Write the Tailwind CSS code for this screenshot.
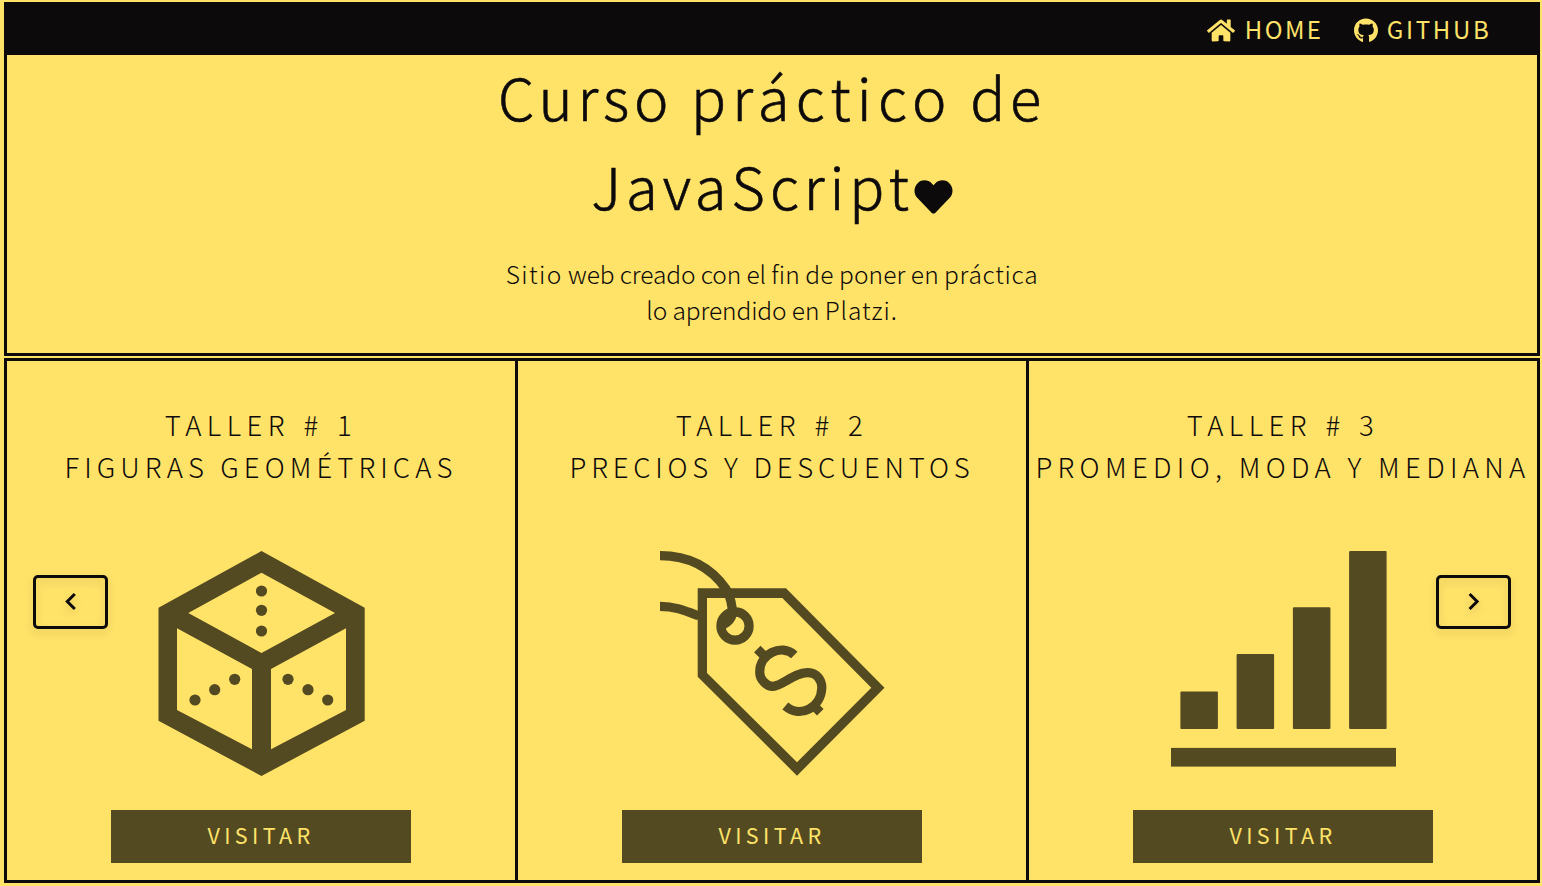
<!DOCTYPE html>
<html lang="es">
<head>
<meta charset="utf-8">
<title>Curso práctico de JavaScript</title>
<script src="https://cdn.jsdelivr.net/npm/@tailwindcss/browser@4"></script>
</head>
<body class="h-[886px] overflow-hidden bg-[#ffe268] pt-[2px] pr-[2px] pl-1 font-['Noto_Sans_CJK_JP','Noto_Sans',sans-serif] font-light text-[#0c0a0b]">
<header class="h-[354px] border-[3px] border-t-0 border-[#0c0a0b]">
  <nav class="-mx-[3px] flex h-[53px] items-center justify-end bg-[#0c0a0b] pr-[48.5px] text-[24px] leading-[50px] font-normal text-[#ffe268]">
    <a class="flex items-center">
      <svg class="mt-[3px] h-[25px] w-7" viewBox="0 0 576 512" fill="currentColor"><path d="M280.37 148.26L96 300.11V464a16 16 0 0 0 16 16l112.06-.29a16 16 0 0 0 15.92-16V368a16 16 0 0 1 16-16h64a16 16 0 0 1 16 16v95.64a16 16 0 0 0 16 16.05L464 480a16 16 0 0 0 16-16V300L295.67 148.26a12.19 12.19 0 0 0-15.3 0zM571.6 251.47L488 182.56V44.05a12 12 0 0 0-12-12h-56a12 12 0 0 0-12 12v72.61L318.47 43a48 48 0 0 0-61 0L4.34 251.47a12 12 0 0 0-1.6 16.9l25.5 31A12 12 0 0 0 45.15 301l235.22-193.74a12.19 12.19 0 0 1 15.3 0L530.9 301a12 12 0 0 0 16.9-1.6l25.5-31a12 12 0 0 0-1.7-16.93z"/></svg>
      <span class="mt-px ml-[9.5px] w-[109.5px] tracking-[2.4px]">HOME</span>
    </a>
    <a class="flex items-center">
      <svg class="mt-[3px] h-[25px] w-6" viewBox="0 0 496 512" fill="currentColor"><path d="M165.900 397.400c0 2-2.300 3.600-5.200 3.600-3.300.3-5.600-1.300-5.600-3.600 0-2 2.300-3.600 5.200-3.600 3-.3 5.600 1.300 5.600 3.600zm-31.100-4.500c-.7 2 1.300 4.300 4.300 4.900 2.600 1 5.600 0 6.200-2s-1.300-4.300-4.300-5.200c-2.600-.7-5.500.3-6.200 2.300zm44.200-1.700c-2.900.7-4.900 2.600-4.600 4.900.3 2 2.900 3.300 5.900 2.600 2.900-.7 4.900-2.600 4.600-4.600-.3-1.900-3-3.200-5.900-2.900zM244.800 8C106.100 8 0 113.300 0 252c0 110.900 69.800 205.800 169.500 239.200 12.800 2.300 17.300-5.600 17.300-12.100 0-6.200-.3-40.400-.3-61.400 0 0-70 15-84.700-29.800 0 0-11.400-29.100-27.800-36.600 0 0-22.900-15.700 1.600-15.400 0 0 24.900 2 38.600 25.800 21.900 38.600 58.600 27.500 72.900 20.900 2.300-16 8.800-27.100 16-33.700-55.900-6.200-112.300-14.300-112.300-110.500 0-27.500 7.600-41.300 23.600-58.900-2.600-6.500-11.100-33.300 2.600-67.900 20.900-6.500 69 27 69 27 20-5.600 41.500-8.500 62.800-8.500s42.800 2.900 62.800 8.500c0 0 48.100-33.600 69-27 13.700 34.700 5.200 61.400 2.600 67.900 16 17.700 25.800 31.500 25.800 58.900 0 96.500-58.900 104.200-114.800 110.500 9.200 7.900 17 22.900 17 46.400 0 33.700-.3 75.400-.3 83.600 0 6.500 4.600 14.400 17.300 12.100C428.200 457.800 496 362.900 496 252 496 113.300 383.500 8 244.800 8z"/></svg>
      <span class="mt-px ml-[8.5px] tracking-[2.7px]">GITHUB</span>
    </a>
  </nav>
  <h1 class="-mt-[3px] text-center text-[58px] leading-[89px] whitespace-nowrap [-webkit-text-stroke:0.6px]">
    <span class="block tracking-[4.8px]">Curso <span class="tracking-[6.2px]">práctico</span> de</span>
    <span class="flex items-center justify-center tracking-[4.9px]">JavaScript<svg class="mt-[23px] h-[38px] w-[39px]" viewBox="0 0 512 512" fill="currentColor"><path d="M462.300 62.600C407.500 15.900 326 24.300 275.700 76.200L256 96.500l-19.700-20.300C186.100 24.300 104.500 15.900 49.700 62.600c-62.800 53.600-66.100 149.800-9.900 207.900l193.500 199.800c12.500 12.900 32.800 12.900 45.300 0l193.500-199.800c56.300-58.100 53-154.300-9.800-207.900z"/></svg></span>
  </h1>
  <p class="mt-[26px] text-center text-[24.5px] leading-9 tracking-[-0.1px]"><span class="tracking-[1.4px]">Sitio</span> web creado con el <span class="tracking-[0.1px]">fin de poner en</span> <span class="tracking-[0.7px]">práctica</span><br>lo aprendido en <span class="tracking-[0.9px]">Platzi.</span></p>
</header>

<main class="relative mt-[2px] flex h-[525px]">
  <section class="flex w-[514px] shrink-0 flex-col items-center border-[3px] border-[#0c0a0b] pt-[42px]">
    <h2 class="text-center text-[27.5px] leading-[42px] whitespace-nowrap"><span class="block tracking-[5.5px] [word-spacing:1.8px]">TALLER # 1</span><span class="block tracking-[5.1px]">FIGURAS GEOMÉTRICAS</span></h2>
    <svg class="mt-16 size-[225px]" viewBox="0 0 225 225" fill="#534a21">
      <path fill-rule="evenodd" d="M112.500 0L215.700 56.700V169.700L112.500 225L9.500 169.700V56.700ZM112.500 21.700L39.300 62L112.500 102L186 62ZM28 77.300V159L103 198.300V118ZM197 77.300L122 118V198.300L197 159Z"/>
      <circle cx="112.500" cy="40" r="5.600"/><circle cx="112.500" cy="59.300" r="5.600"/><circle cx="112.500" cy="80" r="5.600"/>
      <circle cx="46" cy="149" r="5.600"/><circle cx="65.700" cy="138.700" r="5.600"/><circle cx="85.700" cy="128.300" r="5.600"/>
      <circle cx="139" cy="128.300" r="5.600"/><circle cx="159" cy="138.700" r="5.600"/><circle cx="178.700" cy="149" r="5.600"/>
    </svg>
    <a class="mt-[34px] block h-[53px] w-[300px] bg-[#534a21] text-center text-[21.5px] leading-[50px] font-normal tracking-[4.4px] text-[#ffe268]">VISITAR</a>
  </section>
  <section class="-ml-[3px] flex w-[514px] shrink-0 flex-col items-center border-[3px] border-[#0c0a0b] pt-[42px]">
    <h2 class="text-center text-[27.5px] leading-[42px] whitespace-nowrap"><span class="block tracking-[5.5px] [word-spacing:1.8px]">TALLER # 2</span><span class="block tracking-[4.8px]">PRECIOS Y DESCUENTOS</span></h2>
    <svg class="mt-16 size-[225px]" viewBox="0 0 225 225" fill="none" stroke="#534a21" stroke-width="9.200">
      <path fill="#534a21" stroke="none" fill-rule="evenodd" d="M37.700 37.300H126L224.500 136.700L137 224.700L37.700 125.700ZM47 47V122L137 211.300L211.300 136.700L122.300 47Z"/>
      <circle cx="75" cy="75" r="14.100"/>
      <path d="M0 4.700C30 4.700 52 18 66 38C71 47 72.500 57 72.300 63Q71 70 63 74"/>
      <path d="M0 55.300C15 55.300 26 60 39 65"/>
      <path d="M134.300 104C122 92 98.700 103 99.800 122C99.800 128 106 135.500 113 135.300C122 135 135 121 148 121.700C157 122 162 129 161.800 137C161 156 141 168 125.300 155M97.300 98L104.500 105.200M153.300 154.300L160.300 161.300"/>
    </svg>
    <a class="mt-[34px] block h-[53px] w-[300px] bg-[#534a21] text-center text-[21.5px] leading-[50px] font-normal tracking-[4.4px] text-[#ffe268]">VISITAR</a>
  </section>
  <section class="-ml-[3px] flex w-[514px] shrink-0 flex-col items-center border-[3px] border-[#0c0a0b] pt-[42px]">
    <h2 class="text-center text-[27.5px] leading-[42px] whitespace-nowrap"><span class="block tracking-[5.5px] [word-spacing:1.8px]">TALLER # 3</span><span class="block tracking-[5.35px]">PROMEDIO, MODA Y MEDIANA</span></h2>
    <svg class="mt-16 size-[225px]" viewBox="0 0 225 225" fill="#534a21">
      <rect x="9.400" y="140.600" width="37.500" height="37.500" rx="1"/><rect x="65.600" y="103.100" width="37.500" height="75" rx="1"/><rect x="121.900" y="56.300" width="37.500" height="121.800" rx="1"/><rect x="178.100" y="0" width="37.500" height="178.100" rx="1"/><rect x="0" y="196.900" width="225" height="18.700"/>
    </svg>
    <a class="mt-[34px] block h-[53px] w-[300px] bg-[#534a21] text-center text-[21.5px] leading-[50px] font-normal tracking-[4.4px] text-[#ffe268]">VISITAR</a>
  </section>
  <button class="absolute top-[217px] left-[29px] flex h-[54px] w-[75px] items-center justify-center rounded-[5px] border-[3px] border-[#0c0a0b] drop-shadow-[0_4px_4px_rgba(0,0,0,0.12)]">
    <svg class="size-6" viewBox="0 0 24 24" fill="none" stroke="#0c0a0b" stroke-width="3"><path d="M15.800 4L8.300 11.500L15.800 19"/></svg>
  </button>
  <button class="absolute top-[217px] right-[29px] flex h-[54px] w-[75px] items-center justify-center rounded-[5px] border-[3px] border-[#0c0a0b] drop-shadow-[0_4px_4px_rgba(0,0,0,0.12)]">
    <svg class="size-6" viewBox="0 0 24 24" fill="none" stroke="#0c0a0b" stroke-width="3"><path d="M7.600 4L15.100 11.500L7.600 19"/></svg>
  </button>
</main>
</body>
</html>
